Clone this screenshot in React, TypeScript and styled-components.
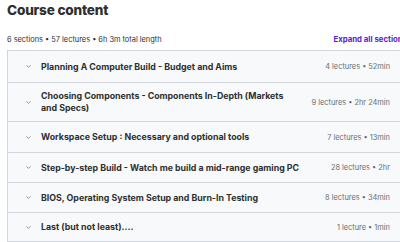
import React from "react";
import styled, { createGlobalStyle } from "styled-components";

const Global = createGlobalStyle`
  html, body { margin: 0; padding: 0; background: #fff; overflow: hidden; }
  body { font-family: Inter, "Noto Sans", sans-serif; color: #2d2f31; }
`;

const Page = styled.div`
  width: 400px;
  padding: 0 0 0 7px;
`;

const Title = styled.h2`
  margin: 0;
  font-size: 13.6px;
  font-weight: 800;
  letter-spacing: -0.2px;
  line-height: 20px;
`;

const Summary = styled.div`
  display: flex;
  justify-content: space-between;
  align-items: center;
  margin-top: 11px;
  height: 16px;
  margin-bottom: 3px;
`;

const Stats = styled.span`
  font-size: 7.4px;
  color: #2d2f31;
`;

const ExpandLink = styled.button`
  border: none;
  background: none;
  padding: 0;
  font-family: inherit;
  font-size: 7.8px;
  font-weight: 700;
  color: #5624d0;
  white-space: nowrap;
  cursor: pointer;
`;

const List = styled.div`
  border: 1px solid #d1d7dc;
  border-bottom: none;
`;

const Row = styled.div`
  display: flex;
  align-items: center;
  min-height: 29px;
  padding: 5px 16px 5px 17px;
  box-sizing: border-box;
  background: #f7f9fa;
  border-bottom: 1px solid #d1d7dc;
`;

const Chevron = styled.span`
  display: flex;
  width: 16px;
  flex-shrink: 0;
  color: #6a6f73;
`;

const SectionTitle = styled.span`
  flex: 1;
  font-size: 8.8px;
  font-weight: 700;
  line-height: 12px;
  padding-right: 22px;
`;

const Meta = styled.span`
  font-size: 7.4px;
  color: #6a6f73;
  white-space: nowrap;
`;

const sections = [
  ["Planning A Computer Build - Budget and Aims", "4 lectures • 52min", 32],
  ["Choosing Components - Components In-Depth (Markets and Specs)", "9 lectures • 2hr 24min", 39],
  ["Workspace Setup : Necessary and optional tools", "7 lectures • 13min", 31],
  ["Step-by-step Build - Watch me build a mid-range gaming PC", "28 lectures • 2hr", 30],
  ["BIOS, Operating System Setup and Burn-In Testing", "8 lectures • 34min", 30],
  ["Last (but not least)....", "1 lecture • 1min", 29],
] as const;

export default function App() {
  return (
    <Page>
      <Global />
      <Title>Course content</Title>
      <Summary>
        <Stats>6 sections • 57 lectures • 6h 3m total length</Stats>
        <ExpandLink>Expand all sections</ExpandLink>
      </Summary>
      <List>
        {sections.map(([title, meta, h]) => (
          <Row key={title} style={{ height: h }}>
            <Chevron>
              <svg width="7" height="7" viewBox="0 0 24 24" fill="none" stroke="currentColor" strokeWidth="2.5" strokeLinecap="round" strokeLinejoin="round">
                <path d="M6 9l6 6 6-6" />
              </svg>
            </Chevron>
            <SectionTitle>{title}</SectionTitle>
            <Meta>{meta}</Meta>
          </Row>
        ))}
      </List>
    </Page>
  );
}
